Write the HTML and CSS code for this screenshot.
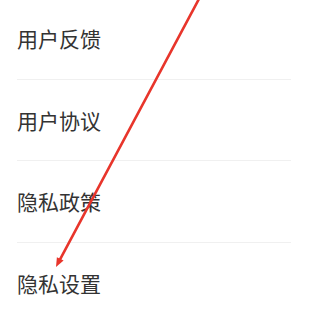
FILE: index.html
```html
<!DOCTYPE html>
<html lang="zh-CN">
<head>
<meta charset="utf-8">
<link rel="stylesheet" href="styles.css">
</head>
<body>
<div class="page">
  <ul class="menu">
    <li class="item"><span>用户反馈</span></li>
    <li class="item"><span>用户协议</span></li>
    <li class="item"><span>隐私政策</span></li>
    <li class="item"><span>隐私设置</span></li>
  </ul>
  <svg class="arrow" width="291" height="309" viewBox="0 0 291 309">
    <line x1="200" y1="-3" x2="60.2" y2="259.1" stroke="#e8352b" stroke-width="2.6" stroke-linecap="round"/>
    <polygon points="56,267 63.6,260.6 56.9,257.2" fill="#e8352b"/>
  </svg>
</div>
</body>
</html>
```
FILE: styles.css
```css
html, body {
  margin: 0;
  padding: 0;
  background: #ffffff;
}
.page {
  position: relative;
  width: 291px;
  height: 309px;
  overflow: hidden;
}
.menu {
  list-style: none;
  margin: -2px 0 0 0;
  padding: 0 0 0 17px;
}
.item {
  height: 80.5px;
  display: flex;
  align-items: center;
  border-bottom: 1px solid #f0f0f0;
  font-family: "Noto Sans CJK SC", "Noto Sans", sans-serif;
  font-size: 21px;
  color: #333333;
}
.item span {
  letter-spacing: 0;
}
.arrow {
  position: absolute;
  left: 0;
  top: 0;
  pointer-events: none;
}
```
